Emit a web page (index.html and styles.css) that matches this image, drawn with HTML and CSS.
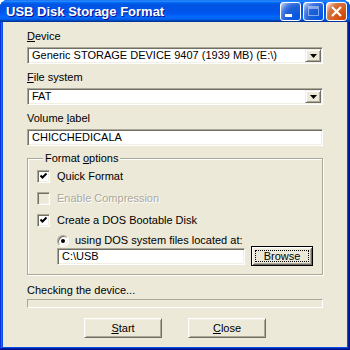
FILE: index.html
```html
<!DOCTYPE html>
<html lang="en">
<head>
  <meta charset="UTF-8" />
  <title>USB Disk Storage Format</title>
  <link rel="stylesheet" href="styles.css">
</head>
<body>
  <div class="window">
    <div class="titlebar">
      <span class="title">USB Disk Storage Format</span>
      <div class="controls">
        <span class="tb-btn">
          <svg width="19" height="19" viewBox="0 0 19 19"><rect x="4" y="12" width="7" height="3" fill="#fff"/></svg>
        </span>
        <span class="tb-btn faded">
          <svg width="19" height="19" viewBox="0 0 19 19"><rect x="4.5" y="4.5" width="10" height="9" fill="none" stroke="#fff"/><rect x="4" y="4" width="11" height="3" fill="#fff"/></svg>
        </span>
        <span class="tb-btn close">
          <svg width="19" height="19" viewBox="0 0 19 19"><path d="M5 5 L14 14 M14 5 L5 14" stroke="#fff" stroke-width="2.2"/></svg>
        </span>
      </div>
    </div>

    <div class="client">
      <div class="lbl"><u>D</u>evice</div>
      <div class="combo">
        <span class="combo-text">Generic STORAGE DEVICE 9407 (1939 MB) (E:\)</span>
        <span class="drop"><svg width="7" height="4" viewBox="0 0 7 4"><path d="M0 0 H7 L3.5 4 Z" fill="#000"/></svg></span>
      </div>

      <div class="lbl gap"><u>F</u>ile system</div>
      <div class="combo">
        <span class="combo-text">FAT</span>
        <span class="drop"><svg width="7" height="4" viewBox="0 0 7 4"><path d="M0 0 H7 L3.5 4 Z" fill="#000"/></svg></span>
      </div>

      <div class="lbl gap">Volume <u>l</u>abel</div>
      <div class="edit">CHICCHEDICALA</div>

      <fieldset class="group">
        <legend>Format <u>o</u>ptions</legend>
        <div class="row first">
          <span class="check"><svg width="11" height="11" viewBox="0 0 11 11"><path d="M2.5 4.5 L4.5 6.5 L8.5 2.5" fill="none" stroke="#000" stroke-width="2"/></svg></span>
          <span>Quick Format</span>
        </div>
        <div class="row disabled">
          <span class="check off"></span>
          <span>Enable Compression</span>
        </div>
        <div class="row">
          <span class="check"><svg width="11" height="11" viewBox="0 0 11 11"><path d="M2.5 4.5 L4.5 6.5 L8.5 2.5" fill="none" stroke="#000" stroke-width="2"/></svg></span>
          <span>Create a DOS Bootable Disk</span>
        </div>
        <div class="row radio-row">
          <span class="radio"><span class="dot"></span></span>
          <span>using DOS system files located at:</span>
        </div>
        <div class="path-row">
          <div class="edit path">C:\USB</div>
          <div class="btn default"><span class="focus">Browse</span></div>
        </div>
      </fieldset>

      <div class="status">Checking the device...</div>
      <div class="progress"></div>

      <div class="actions">
        <div class="btn wide"><u>S</u>tart</div>
        <div class="btn wide"><u>C</u>lose</div>
      </div>
    </div>
  </div>
</body>
</html>
```

FILE: styles.css
```css
* {
  box-sizing: border-box;
}
body {
  margin: 0;
  background: #fff;
  font-family: 'Liberation Sans', Arial, sans-serif;
  font-size: 11px;
  color: #000;
}
.window {
  width: 350px;
  height: 350px;
  display: flex;
  flex-direction: column;
  padding: 0 3px 3px;
  background: #0a4ee4;
  border-radius: 8px 8px 0 0;
  box-shadow: inset -1px -1px #00138c, inset 1px 1px #0831d9, inset -2px -2px #001ea0, inset 2px 2px #166aee;
}
.titlebar {
  height: 22px;
  margin: 0 -3px;
  padding: 0 3px 0 6px;
  display: flex;
  align-items: center;
  justify-content: space-between;
  border-radius: 7px 7px 0 0;
  background: linear-gradient(to bottom, #0058ee 0%, #3593ff 4%, #288eff 6%, #127dff 8%, #036ffc 10%, #0262ee 14%, #0057e5 20%, #0054e3 24%, #0055eb 56%, #005bf5 66%, #026afe 76%, #0062ef 86%, #0052d6 92%, #0040ab 94%, #003092 100%);
}
.title {
  color: #fff;
  font-weight: bold;
  font-size: 13px;
  text-shadow: 1px 1px #0f1089;
  padding-top: 1px;
}
.controls {
  display: flex;
  gap: 2px;
}
.tb-btn {
  width: 21px;
  height: 19px;
  border: 1px solid #fff;
  border-radius: 3px;
  display: flex;
  align-items: center;
  justify-content: center;
  background: radial-gradient(circle at 90% 90%, #0054e9 0%, #2263d5 55%, #4479e4 70%, #a3bbec 90%, #fff 100%);
}
.tb-btn.faded svg {
  opacity: 0.45;
}
.tb-btn.close {
  background: radial-gradient(circle at 90% 90%, #cc4600 0%, #dc6527 55%, #cd7546 70%, #ffccb2 90%, #fff 100%);
}
.client {
  flex: 1;
  display: flex;
  flex-direction: column;
  background: #ece9d8;
  padding: 8px 24px 0 24px;
}
.lbl {
  line-height: 13px;
  margin-bottom: 4px;
}
.lbl.gap {
  margin-top: 7px;
}
.combo, .edit {
  height: 17px;
  background: #fff;
  border: 1px solid;
  border-color: #aca899 #fff #fff #aca899;
  box-shadow: inset 1px 1px #716f64, inset -1px -1px #f1efe2;
  display: flex;
  align-items: center;
  padding: 0 2px 0 4px;
  line-height: 13px;
}
.combo-text {
  flex: 1;
}
.drop {
  width: 16px;
  height: 13px;
  display: flex;
  align-items: center;
  justify-content: center;
  background: #ece9d8;
  border: 1px solid;
  border-color: #f1efe2 #716f64 #716f64 #f1efe2;
  box-shadow: inset 1px 1px #fff, inset -1px -1px #aca899;
  margin-right: -1px;
}
.group {
  margin: 6px 0 0;
  padding: 4px 8px 8px 9px;
  border: 1px solid #aca899;
  box-shadow: inset 1px 1px #fff, 1px 1px #fff;
}
.group legend {
  padding: 0 2px;
  margin-left: 6px;
  line-height: 13px;
  background: #ece9d8;
}
.row {
  display: flex;
  align-items: center;
  gap: 7px;
  height: 13px;
  margin-top: 9px;
  line-height: 13px;
}
.row.first {
  margin-top: 1px;
}
.row.disabled {
  color: #aca899;
  text-shadow: 1px 1px #fff;
}
.check {
  width: 13px;
  height: 13px;
  flex: none;
  background: #fff;
  border: 1px solid;
  border-color: #aca899 #fff #fff #aca899;
  box-shadow: inset 1px 1px #716f64, inset -1px -1px #f1efe2;
}
.check svg {
  display: block;
}
.check.off {
  background: #ece9d8;
}
.radio-row {
  margin-top: 7px;
  margin-left: 20px;
  gap: 6px;
}
.radio {
  width: 12px;
  height: 12px;
  flex: none;
  border-radius: 50%;
  background: #fff;
  border: 1px solid;
  border-color: #aca899 #fff #fff #aca899;
  box-shadow: inset 1px 1px #716f64, inset -1px -1px #f1efe2;
  display: flex;
  align-items: center;
  justify-content: center;
}
.dot {
  width: 4px;
  height: 4px;
  border-radius: 50%;
  background: #000;
}
.path-row {
  display: flex;
  align-items: center;
  gap: 6px;
  margin-top: -1px;
  margin-left: 20px;
}
.edit.path {
  width: 188px;
}
.btn {
  height: 20px;
  display: flex;
  align-items: center;
  justify-content: center;
  background: #ece9d8;
  border: 1px solid;
  border-color: #fff #716f64 #716f64 #fff;
  box-shadow: inset 1px 1px #f1efe2, inset -1px -1px #aca899;
}
.btn.default {
  width: 62px;
  padding: 3px;
  border: 1px solid #000;
  box-shadow: inset 1px 1px #fff, inset -1px -1px #716f64, inset 2px 2px #f1efe2, inset -2px -2px #aca899;
}
.focus {
  flex: 1;
  align-self: stretch;
  text-align: center;
  line-height: 12px;
  outline: 1px dotted #000;
  outline-offset: -1px;
}
.status {
  margin-top: 9px;
  line-height: 13px;
}
.progress {
  height: 9px;
  margin-top: 2px;
  border: 1px solid;
  border-color: #aca899 #fff #fff #aca899;
}
.actions {
  display: flex;
  justify-content: center;
  gap: 26px;
  margin-top: 10px;
}
.btn.wide {
  width: 78px;
}
```
